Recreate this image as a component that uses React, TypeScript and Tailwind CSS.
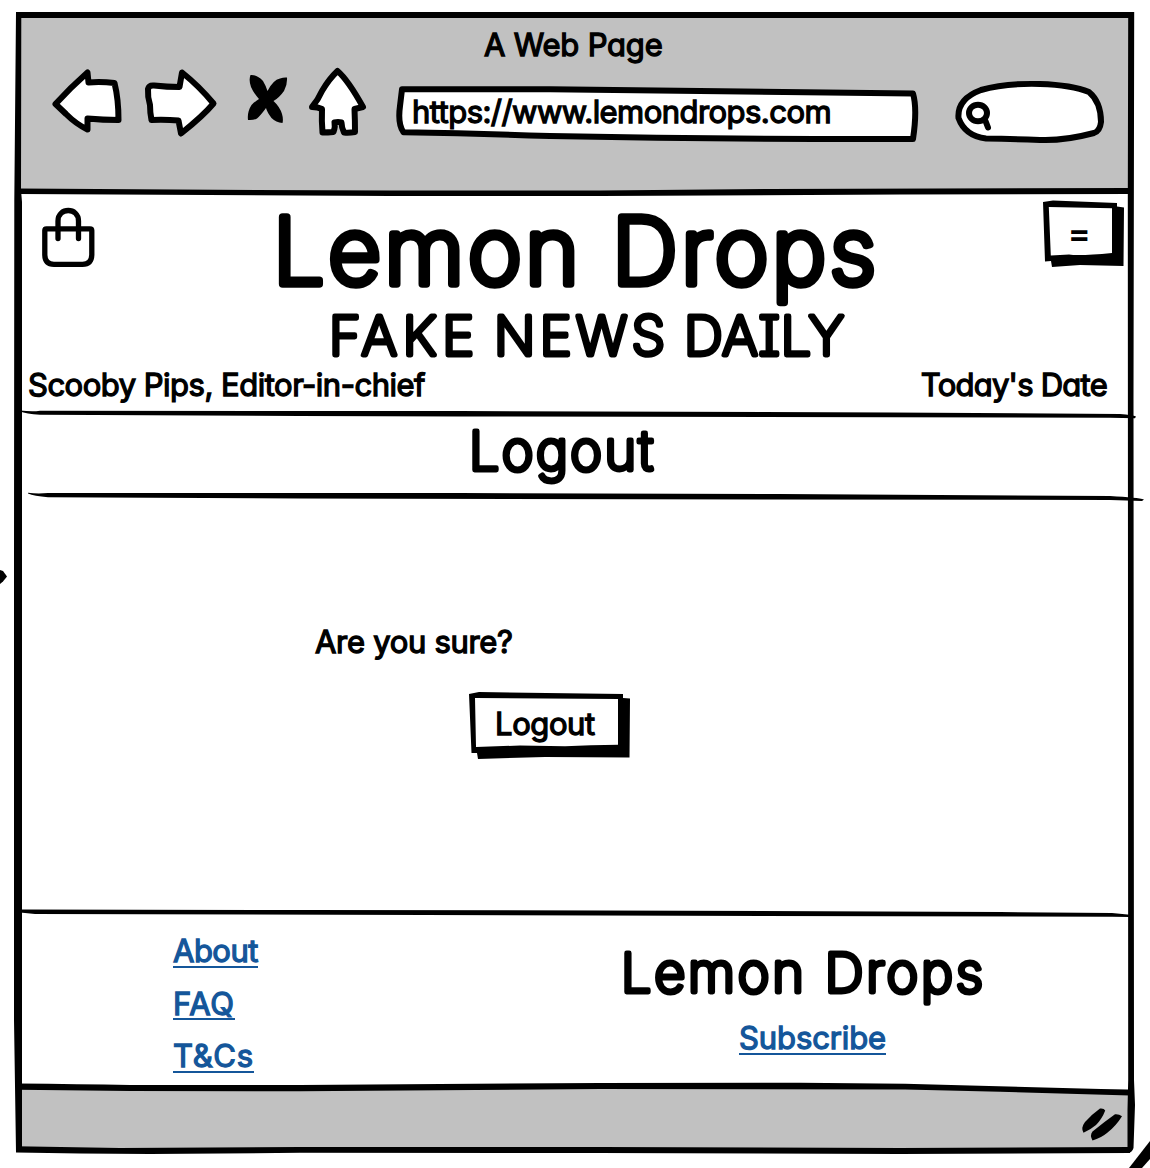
import type { ReactNode } from 'react';

const INK = '#000000';

type Word = { text: string; x: number; length: number };

type HeadingProps = {
  words: Word[];
  width: number;
  height: number;
  size: number;
  stroke: number;
  baseline: number;
  className?: string;
};

/* Marker-style lettering: a thin face thickened by a round-jointed outline. */
function MarkerHeading({ words, width, height, size, stroke, baseline, className }: HeadingProps) {
  return (
    <svg width={width} height={height} className={'block shrink-0 overflow-visible ' + (className ?? '')}>
      <g fontSize={size} fontWeight={200} stroke={INK} strokeWidth={stroke} strokeLinejoin="round" strokeLinecap="round">
        {words.map((word) => (
          <text key={word.text} x={word.x} y={baseline} textLength={word.length}>
            {word.text}
          </text>
        ))}
      </g>
    </svg>
  );
}

/* A stroke across the page; its path uses page coordinates. */
function Rule({ top, height, d }: { top: number; height: number; d: string }) {
  return (
    <svg
      className="relative z-10 block shrink-0 overflow-visible"
      width={1112}
      height={height}
      viewBox={`18 ${top} 1112 ${height}`}
    >
      <path d={d} fill={INK} />
    </svg>
  );
}

function Glyph({ box, children, className }: { box: [number, number, number, number]; children: ReactNode; className?: string }) {
  return (
    <svg
      width={box[2]}
      height={box[3]}
      viewBox={box.join(' ')}
      className={'shrink-0 overflow-visible ' + (className ?? '')}
      fill="white"
      stroke={INK}
      strokeWidth={6}
      strokeLinejoin="round"
      strokeLinecap="round"
    >
      {children}
    </svg>
  );
}

function TitleBar() {
  return (
    <header className="-mb-[2px] h-[175px] bg-[#c1c1c1]">
      <div className="flex h-[50px] pl-[466px] pt-[14px]">
        <h1 className="h-[30px] whitespace-nowrap text-[31px] leading-[30px] tracking-[-0.2px]">A Web Page</h1>
      </div>
      <div className="flex pl-[34px]">
        <Glyph box={[52, 66, 70, 80]}>
          <path d="M55.5 104 Q70 88 87.5 72.5 L88.5 82.5 Q101 81.500 114.500 83 Q118.500 99 118.500 120 Q103 120 87.500 118.500 L87.500 129.500 Q76 124 66 114 Z" />
        </Glyph>
        <Glyph box={[144, 66, 72, 80]} className="ml-[22px]">
          <path d="M154 85.500 Q167 87 179.500 87 L182 72.500 Q199 86 213.500 103.500 Q203 116 181 133.500 L178.500 120.500 Q166 119.500 151.500 120 Q150 113 150 105 Q147.500 97 148 89 Q149 85 154 85.500 Z" />
        </Glyph>
        <Glyph box={[246, 66, 42, 80]} className="ml-[30px]">
          <path
            stroke="none"
            fill={INK}
            d="M250.500 75 Q257 74.500 263 81 Q266 86 267.500 91 Q273 80 280 78.500 Q284 77 287 77.500 Q287.500 85 284 91 Q279 98 273.500 101 Q280 107 282 114 Q283.500 119 282.500 123 Q276 122.500 271.500 118 Q267 112 266 108 Q261 115 257 118.500 Q253 120.500 248 120 Q247 112 251.500 105 Q255 101.500 259 99 Q253.500 93 251 87 Q248.500 80 250.500 75 Z"
          />
        </Glyph>
        <Glyph box={[308, 66, 58, 80]} className="ml-[20px]">
          <path d="M337.500 71 Q348 80 363 107 L354.500 109 Q355 121 355 132 Q349 133 344 132.500 Q341.500 127 341.500 122.500 Q338 121.500 334.500 122.500 Q335.500 127 333.500 132 Q328 132.500 322.500 132.500 Q321.500 121 322 109 Q318 107 312 107 Q318 100 322 91 Q329 79 337.500 71 Z" />
        </Glyph>
        <div className="relative ml-[32px] h-[80px] w-[520px] shrink-0">
          <Glyph box={[398, 66, 520, 80]} className="absolute inset-0">
            <path d="M402 89.300 L550 89.300 Q730 91 913 93.500 Q917.500 109 913 139 Q730 139.500 550 136 Q480 133.500 403.500 132.300 Q397.500 124 400 106 Z" />
          </Glyph>
          <span className="relative ml-[14px] mt-[31px] block h-[30px] whitespace-nowrap text-[31px] leading-[30px] tracking-[-0.55px]">
            https://www.lemondrops.com
          </span>
        </div>
        <Glyph box={[956, 66, 146, 80]} className="ml-[38px]">
          <path d="M986 138.500 Q965 136 958.500 118 Q957 99 981 90 Q1006 83 1040 84 Q1072 85 1089 92 Q1101 102 1101 122 Q1100 131 1094 133 Q1064 141 1040 140 Q1010 139 986 138.500 Z" />
          <path d="M985.500 121 L988 127.500" />
          <ellipse cx="978" cy="113" rx="9" ry="8.300" fill="white" />
        </Glyph>
      </div>
    </header>
  );
}

function Masthead() {
  return (
    <section className="h-[216px] bg-white">
      <div className="flex h-[110px] items-start">
        <Glyph box={[42, 195, 53, 75]} className="ml-[24px]">
          <path strokeWidth={5.300} d="M46.500 228.800 H90 Q91.800 228.800 91.800 230.500 V255 Q91.500 264.300 82.500 264.300 H54 Q45 264.300 44.800 255 V230.500 Q44.800 228.800 46.500 228.800 Z" />
          <path fill="none" strokeWidth={5.300} d="M58 238.500 V221 C58 207 78.500 207 78.500 221 V238.500" />
        </Glyph>
        <MarkerHeading
          words={[{ text: 'Lemon Drops', x: -1, length: 603 }]}
          width={604}
          height={110}
          size={91.500}
          stroke={7.500}
          baseline={88.500}
          className="ml-[179px]"
        />
        <button className="relative ml-[166px] mt-[6px] h-[66px] w-[80px] shrink-0">
          <Glyph box={[1044, 201, 80, 66]} className="absolute inset-0">
            <path stroke="none" fill={INK} d="M1043 202 L1053 200.500 L1117 203 V206.500 L1124 207.500 L1123.500 266 L1080 265 L1052 267 L1051 261 L1045 261.500 Z" />
            <path stroke="none" d="M1048.800 207 L1112 208.300 V253 Q1080 256 1069 254.500 L1050.800 255.500 Z" />
          </Glyph>
          <span className="absolute left-[23.500px] top-[17px] block text-[36px] font-light leading-[30px] [-webkit-text-stroke:1.5px_black]">=</span>
        </button>
      </div>
      <MarkerHeading
        words={[
          { text: 'FAKE', x: 0, length: 145 },
          { text: 'NEWS', x: 165, length: 171 },
          { text: 'DAILY', x: 355, length: 160 },
        ]}
        width={516}
        height={64}
        size={54}
        stroke={4.800}
        baseline={50}
        className="ml-[311px]"
      />
      <div className="flex justify-between pl-[10px] pr-[23px] pt-[0.500px]">
        <span className="h-[30px] whitespace-nowrap text-[31px] leading-[30px] tracking-[-0.5px]">Scooby Pips, Editor-in-chief</span>
        <span className="h-[30px] whitespace-nowrap text-[31px] leading-[30px] tracking-[-0.75px]">Today's Date</span>
      </div>
    </section>
  );
}

function FooterLink({ children, className }: { children: ReactNode; className: string }) {
  return (
    <a
      href="#"
      className={
        'block w-fit whitespace-nowrap border-b-[2.5px] border-[#14569a] pt-[1px] text-[31px] leading-[29.5px] text-[#14569a] [-webkit-text-stroke:1.3px_#14569a] ' +
        className
      }
    >
      {children}
    </a>
  );
}

function FrameSides() {
  return (
    <svg className="pointer-events-none absolute inset-0 z-20" width="1150" height="1168" viewBox="0 0 1150 1168">
      <g fill={INK}>
        <path d="M16 12 L1134 12 L1134 18 L16 18 Z" />
        <path d="M16 12 L21.300 12 L21 190 L22 202 L22 1085 L22 1150 L16 1152 L14 1020 L14 560 L14.300 200 Z" />
        <path d="M1128.200 12 L1134.200 12 L1134 120 L1133.500 400 L1134 1080 L1135 1105 L1133.500 1148 Q1132 1153 1127.500 1153 L1127.500 1110 L1128.200 1080 L1127.800 200 Z" />
        <path d="M0 570 L3 571 L7 576.500 L3 581.500 L0 584 Z" />
        <path d="M1129 1168 L1150 1141 V1159 L1142 1168 Z" />
      </g>
    </svg>
  );
}

export default function App() {
  return (
    <div className="relative h-[1168px] w-[1150px] overflow-hidden bg-white pl-[18px] pt-[16px] font-['Inter',sans-serif] font-normal text-black [-webkit-text-stroke:1.3px_black] [font-feature-settings:'cv11','cv08']">
      <FrameSides />
      <main className="flex w-[1112px] flex-col">
        <TitleBar />
        <Rule top={189} height={6} d="M18 188.500 Q200 190 390 190.500 L600 190.500 L770 189 L1130 188 L1130 194 L900 194.500 L600 196 L390 196 L18 194 Z" />
        <Masthead />
        <Rule top={411} height={5} d="M20 410.500 Q32 412 40 410.800 L460 411 L890 412.500 L1120 414 Q1133 415 1136 416.500 L1135 418.300 L1110 417.800 L890 417.300 L460 416.500 L300 416 L40 414.800 Q26 413.800 20 411.500 Z" />
        <section className="h-[77px]">
          <MarkerHeading
            words={[{ text: 'Logout', x: 1, length: 184 }]}
            width={190}
            height={77}
            size={54}
            stroke={4.800}
            baseline={54}
            className="ml-[450px]"
          />
        </section>
        <Rule top={493} height={6} d="M28 492.800 Q38 494 48 493 L460 493 L780 494 L1110 496 Q1138 497.500 1144 499.500 L1142 501 L1110 500 L780 499.500 L300 498.500 L48 497.200 Q34 496.500 28 493.600 Z" />
        <section className="h-[411px] pl-[297px] pt-[128px]">
          <p className="h-[30px] whitespace-nowrap text-[31px] leading-[30px] tracking-[-0.3px]">Are you sure?</p>
          <button className="relative ml-[155px] mt-[35px] block h-[67px] w-[160px]">
            <Glyph box={[470, 692, 160, 67]} className="absolute inset-0">
              <path stroke="none" fill={INK} d="M469 694 L479 692 L623 694 V698 L630 698.500 L629.500 757.500 L545 757 L478 759 L477 753 L471.500 753 Z" />
              <path stroke="none" d="M475 698 L618 699 V744.800 Q590 745 565 746.200 L520 745.500 L476 747 Z" />
            </Glyph>
            <span className="absolute left-[25px] top-[17px] block whitespace-nowrap leading-[30px] text-[31px] tracking-[-0.4px]">Logout</span>
          </button>
        </section>
        <Rule top={910} height={5} d="M20 909.500 L300 910 L600 910.500 L1000 912 L1112 913 L1130 914.800 V917 L1112 916.800 L600 915.500 L35 914 L20 912.500 Z" />
        <footer className="flex h-[171px] items-start">
          <nav className="flex w-[430px] flex-col pl-[155px] pt-[20px]">
            <FooterLink className="tracking-[-0.5px]">About</FooterLink>
            <FooterLink className="mt-[20px] tracking-[0.7px]">FAQ</FooterLink>
            <FooterLink className="mt-[20px] tracking-[0.7px]">T&amp;Cs</FooterLink>
          </nav>
          <div className="pl-[173px] pt-[17px]">
            <MarkerHeading
              words={[{ text: 'Lemon Drops', x: 0, length: 362 }]}
              width={364}
              height={90}
              size={54}
              stroke={4.800}
              baseline={60}
            />
            <FooterLink className="ml-[118px] tracking-[-0.1px]">Subscribe</FooterLink>
          </div>
        </footer>
        <Rule top={1086} height={5} d="M18 1083.500 Q80 1084 130 1085 L300 1085 L600 1083 L800 1082.800 L905 1083.800 Q1010 1086.500 1130 1089.800 V1095.600 L1000 1091.800 L905 1089.500 L600 1089 L300 1091.200 L130 1091 L18 1089.800 Z" />
        <div className="-mt-[2px] flex h-[60px] items-end justify-end bg-[#c1c1c1]">
          <Glyph box={[1080, 1091, 50, 58]}>
            <g stroke="none" fill={INK}>
              <path d="M1083.500 1132.800 Q1080.500 1128 1085 1122 Q1091 1115 1100 1108.500 Q1104 1108 1105.200 1110.500 Q1102 1119 1096 1125 Q1090 1130 1083.500 1132.800 Z" />
              <path d="M1092.500 1140.500 Q1089.500 1135 1092.500 1131.500 Q1104 1122 1115 1114.200 Q1119 1113.800 1122 1116.200 Q1116 1126 1107 1133 Q1101 1138 1092.500 1140.500 Z" />
            </g>
          </Glyph>
        </div>
        <Rule top={1149} height={5} d="M16 1146.300 L120 1148 L300 1147 L600 1147 L900 1148 L1130 1147 V1153 L900 1154 L600 1153 L300 1152.800 L150 1154 L80 1153.500 L16 1152.500 Z" />
      </main>
    </div>
  );
}
